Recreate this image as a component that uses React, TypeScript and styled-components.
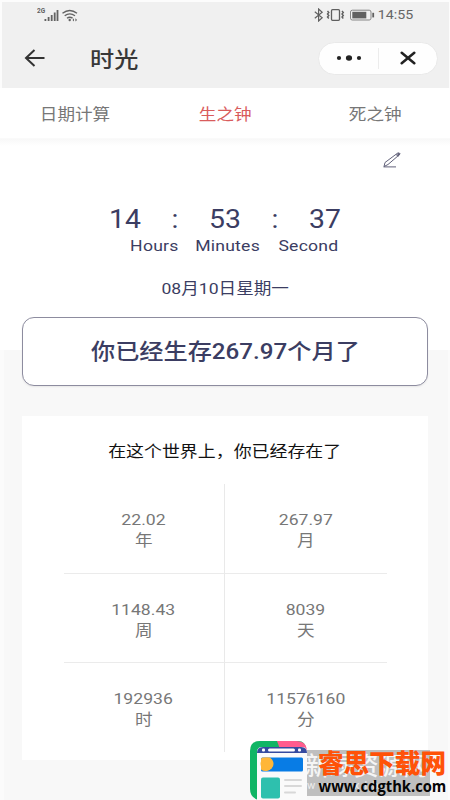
import React from "react";
import styled, { createGlobalStyle } from "styled-components";

const Global = createGlobalStyle`
  body { margin: 0; background: #fff; }
  * { box-sizing: border-box; }
`;

const Screen = styled.main`
  position: relative;
  width: 450px;
  height: 800px;
  overflow: hidden;
  background: #fff;
  font-family: Roboto, "Noto Sans CJK SC", sans-serif;
`;

/* Wide lettering used across the whole app */
const Label = styled.span<{ $size?: number; $color?: string; $weight?: number; $wide?: number; $line?: number }>`
  display: block;
  flex: none;
  white-space: nowrap;
  font-size: ${(p) => p.$size ?? 15.5}px;
  line-height: ${(p) => p.$line ?? 22}px;
  font-weight: ${(p) => p.$weight ?? 400};
  color: ${(p) => p.$color ?? "#777"};
  transform: scaleX(${(p) => p.$wide ?? 1.135});
`;

const Header = styled.header`
  display: flex;
  flex-direction: column;
  height: 88px;
  background: #f0f0f0;
  border: solid #fcfcfc;
  border-width: 2px 1px 0 2px;
`;

const StatusBar = styled.div`
  display: flex;
  justify-content: space-between;
  align-items: center;
  height: 26px;
  padding: 0 37px 0 35px;
`;

const StatusGroup = styled.div`
  display: flex;
  align-items: center;
`;

const Clock = styled(Label)`
  margin-left: 4px;
`;

const NavBar = styled.div`
  display: flex;
  align-items: center;
  height: 60px;
  padding: 0 11px 0 22px;
`;

const Title = styled.h1`
  margin: 3px 0 0 48px;
  flex: 1;
  display: flex;
`;

const Capsule = styled.div`
  display: grid;
  grid-template-columns: 59px 1px 1fr;
  align-items: center;
  justify-items: center;
  width: 120px;
  height: 33px;
  border-radius: 17px;
  background: #fefefe;
  border: 1px solid #e9e9e9;
`;

const CapsuleLine = styled.i`
  width: 1px;
  height: 21px;
  background: #ececec;
`;

const Tabs = styled.nav`
  display: grid;
  grid-template-columns: repeat(3, 150px);
  justify-items: center;
  align-items: center;
  height: 51px;
  padding-top: 3px;
  border-bottom: 1px solid #fafafa;
`;

const TimePanel = styled.section`
  display: flex;
  flex-direction: column;
  align-items: center;
  height: 211px;
  background: linear-gradient(#f8f8f8, #fff 7px);
`;

const EditRow = styled.div`
  align-self: stretch;
  display: flex;
  justify-content: flex-end;
  height: 65px;
  padding: 12px 48px 0 0;
`;

const Digits = styled.div`
  display: grid;
  grid-template-columns: repeat(5, 50px);
  justify-items: center;
  height: 31px;
`;

const Units = styled.div`
  display: grid;
  grid-template-columns: 74px 74px 87px;
  justify-items: center;
  margin: 0 0 21px 19px;
`;

const Unit = styled(Label)`
  letter-spacing: 0.2px;
`;

const Lower = styled.section`
  display: flex;
  flex-direction: column;
  height: 450px;
  padding: 0 20px 0 18px;
  background: #f8f8f8;
  border: solid #fbfbfb;
  border-width: 0 2px 0 4px;
`;

const Result = styled.div`
  flex: none;
  display: flex;
  align-items: center;
  justify-content: center;
  height: 69px;
  margin-top: -33px;
  border: 1px solid #8d8c9f;
  border-radius: 12px;
  background: #fff;
  box-shadow: 0 1px 2px #00000012;
`;

const Card = styled.div`
  flex: none;
  margin-top: 30px;
  height: 344px;
  padding-top: 25px;
  background: #fff;
  display: flex;
  flex-direction: column;
  align-items: center;
`;

const Stats = styled.div`
  display: grid;
  grid-template-columns: 161px 162px;
  grid-template-rows: 90px 89px 89px;
  margin-top: 21px;
`;

const Cell = styled.div<{ $right: boolean; $bottom: boolean }>`
  display: flex;
  flex-direction: column;
  align-items: center;
  padding-top: 25px;
  border-right: ${(p) => (p.$right ? "1px solid #e9e9e9" : "0")};
  border-bottom: ${(p) => (p.$bottom ? "1px solid #ebebeb" : "0")};
`;

const CellUnit = styled(Label)`
  margin-top: -1px;
`;

const Watermark = styled.aside`
  position: absolute;
  right: 2px;
  bottom: 0;
  width: 200px;
  height: 60px;
`;

const WatermarkShade = styled.div`
  position: absolute;
  left: 54px;
  top: 10px;
  width: 128px;
  height: 46px;
  padding: 3px 0 0 3px;
  background: #bfbfbf;
`;

const ShadeDomain = styled(Label)`
  padding-left: 2px;
  letter-spacing: 5px;
`;

const WatermarkLogo = styled.svg`
  position: absolute;
  left: 0;
  top: 0;
`;

const WatermarkText = styled.div`
  position: absolute;
  left: 70px;
  top: 7px;
  width: 128px;
  display: flex;
  flex-direction: column;
  align-items: center;
`;

const Domain = styled(Label)`
  font-family: "Open Sans", "Noto Sans", sans-serif;
  margin-top: -6px;
`;

const navy = "#3b3d62";
const stats = [
  ["22.02", "年"],
  ["267.97", "月"],
  ["1148.43", "周"],
  ["8039", "天"],
  ["192936", "时"],
  ["11576160", "分"],
];

const SignalIcon = () => (
  <svg width="42" height="16" viewBox="0 0 42 16" fill="#626262">
    <text x="0" y="6" fontSize="6.5" fontWeight="700" fontFamily="Roboto">2G</text>
    <rect x="7.5" y="12" width="1.8" height="2" />
    <rect x="10.7" y="10" width="1.8" height="4" />
    <rect x="13.8" y="8" width="1.8" height="6" />
    <rect x="16.8" y="5.5" width="1.8" height="8.5" />
    <rect x="19.6" y="3" width="1.8" height="11" />
    <g fill="none" stroke="#626262" strokeWidth="1.4">
      <path d="M25.5 6.2Q32.7 .8 40 6.2M27.7 8.8Q32.7 5 38 8.8M30 11.2Q32.7 9.2 35.6 11.2" />
    </g>
    <circle cx="32.7" cy="13" r="1.2" />
    <path d="m37 11.2-1.5 1.7 1.5 1.7zM38.4 11.2l1.7 1.7-1.7 1.7z" />
  </svg>
);

const DeviceIcons = () => (
  <svg width="61" height="14" viewBox="0 0 61 14" fill="none" stroke="#5f5f5f">
    <path d="m.8 3.7 7.4 6L4.6 13V1l3.6 3.3-7.4 6" strokeWidth="1.15" />
    <rect x="17.5" y="1.7" width="8" height="10.6" rx="1" strokeWidth="1.3" />
    <path d="m13.5 3 1.3 1.5-1.3 1.5 1.3 1.5-1.3 1.5 1.3 1.5M28 3l1.3 1.5L28 6l1.3 1.5L28 9l1.3 1.5" strokeWidth="1.4" />
    <rect x="36.5" y="2.2" width="20.5" height="9.8" rx="1.8" stroke="#858585" strokeWidth="1" />
    <rect x="38.3" y="3.8" width="14" height="6.6" fill="#606060" stroke="none" />
    <path d="M59.2 4.8v4.6" strokeWidth="1.8" />
  </svg>
);

const LogoArt = () => (
  <WatermarkLogo width="60" height="60" viewBox="0 0 60 60">
    <path d="M12 1H50Q58 1 58 10V60H11Q2 58 2 49V11Q2 1 12 1Z" fill="#10b565" />
    <path d="M29 1H48Q59 1 59 12V20H36Z" fill="#ff5c8e" />
    <path d="M9 12Q9 7 14 7H54Q59 7 59 12V60H9Z" fill="#fafafa" />
    <path d="M9 13Q9 7 15 7H53Q59 7 59 13H9Z" fill="#354ba0" />
    <rect x="14" y="8.5" width="3" height="3" rx="1" fill="#fff" />
    <rect x="20" y="8.5" width="27" height="3" rx="1.5" fill="#fff" />
    <rect x="50" y="8.5" width="3" height="3" rx="1" fill="#fff" />
    <rect x="13" y="17.5" width="42" height="14" rx="1.5" fill="#087ce5" />
    <path d="M15 17.5H22A7 7 0 0 1 13 29.5V19.5Q13 17.5 15 17.5Z" fill="#ffb638" />
    <circle cx="19" cy="24" r="6.5" fill="#ffb638" />
    <rect x="13" y="37.5" width="19" height="21" rx="2" fill="#2ec0ae" />
    <path d="M37 40H53M37 46H53M37 52.5H47" stroke="#d8d8d8" strokeWidth="2" strokeLinecap="round" />
  </WatermarkLogo>
);

export default function App() {
  return (
    <Screen>
      <Global />
      <Header>
        <StatusBar>
          <StatusGroup><SignalIcon /></StatusGroup>
          <StatusGroup>
            <DeviceIcons />
            <Clock $size={13.2} $wide={1.08} $color="#666">14:55</Clock>
          </StatusGroup>
        </StatusBar>
        <NavBar>
          <svg width="21" height="18" viewBox="0 0 21 18" fill="none" stroke="#333" strokeWidth="2">
            <path d="M10.5 1 2 9l8.5 8M2 9H20.5" />
          </svg>
          <Title><Label $size={21.3} $weight={500} $color="#383838" $line={30}>时光</Label></Title>
          <Capsule>
            <svg width="26" height="8" viewBox="0 0 26 8" fill="#222">
              <circle cx="3" cy="4" r="2.1" /><ellipse cx="13" cy="4" rx="3.1" ry="2.7" /><circle cx="23" cy="4" r="2.1" />
            </svg>
            <CapsuleLine />
            <svg width="16" height="14" viewBox="0 0 16 14" stroke="#222" strokeWidth="2.5" strokeLinecap="round">
              <path d="M1.7 1.7 14.3 12.3M14.3 1.7 1.7 12.3" />
            </svg>
          </Capsule>
        </NavBar>
      </Header>
      <Tabs>
        <Label>日期计算</Label>
        <Label $color="#d95c5c">生之钟</Label>
        <Label>死之钟</Label>
      </Tabs>
      <TimePanel>
        <EditRow>
          <svg width="20" height="18" viewBox="0 0 20 18" fill="none" stroke="#62627a" strokeWidth="1">
            <path d="M2 15.5 3 11.5 15.5 2.2Q17.5 1.2 18.2 3L6 13.5ZM14 3.5l2.5 1.8M1.5 15.9H14" />
            <path d="m15.5 2.5 2 1.3" strokeWidth="2" />
          </svg>
        </EditRow>
        <Digits>
          {["14", ":", "53", ":", "37"].map((t, i) => (
            <Label key={i} $size={25} $line={32} $color={navy}>{t}</Label>
          ))}
        </Digits>
        <Units>
          {["Hours", "Minutes", "Second"].map((t) => (
            <Unit key={t} $color={navy}>{t}</Unit>
          ))}
        </Units>
        <Label $color={navy}>08月10日星期一</Label>
      </TimePanel>
      <Lower>
        <Result>
          <Label $size={21.3} $weight={500} $line={30} $color={navy}>你已经生存267.97个月了</Label>
        </Result>
        <Card>
          <Label $size={15.8} $color="#111">在这个世界上，你已经存在了</Label>
          <Stats>
            {stats.map(([value, unit], i) => (
              <Cell key={unit} $right={i % 2 === 0} $bottom={i < 4}>
                <Label>{value}</Label>
                <CellUnit>{unit}</CellUnit>
              </Cell>
            ))}
          </Stats>
        </Card>
      </Lower>
      <Watermark>
        <WatermarkShade>
          <Label $size={24.5} $line={27} $weight={500} $color="#f5f5f5" $wide={1}>新绿资源网</Label>
          <ShadeDomain $size={11} $line={12} $color="#eee" $wide={1}>www.xlb</ShadeDomain>
        </WatermarkShade>
        <LogoArt />
        <WatermarkText>
          <Label $size={25.6} $line={34} $weight={900} $wide={1} $color="#ff5208">睿思下载网</Label>
          <Domain $size={16} $line={22} $weight={700} $wide={0.92} $color="#050505">www.cdgthk.com</Domain>
        </WatermarkText>
      </Watermark>
    </Screen>
  );
}
